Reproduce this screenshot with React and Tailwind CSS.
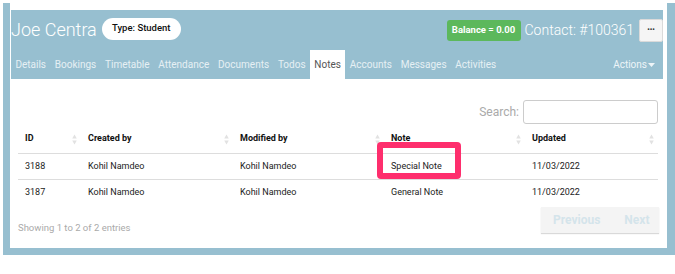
import React from 'react';

const tabs = ['Details', 'Bookings', 'Timetable', 'Attendance', 'Documents', 'Todos', 'Notes', 'Accounts', 'Messages', 'Activities'];

const columns = [
  { label: 'ID', w: 'w-[63px]' },
  { label: 'Created by', w: 'w-[152px]' },
  { label: 'Modified by', w: 'w-[151px]' },
  { label: 'Note', w: 'w-[141px]' },
  { label: 'Updated', w: 'w-[133px]' },
];

const rows = [
  ['3188', 'Kohil Namdeo', 'Kohil Namdeo', 'Special Note', '11/03/2022'],
  ['3187', 'Kohil Namdeo', 'Kohil Namdeo', 'General Note', '11/03/2022'],
];

const SortIcon = () => (
  <svg width="5" height="11" viewBox="0 0 5 11" className="shrink-0">
    <path d="M2.5 0.5 L4.8 4.5 L0.2 4.5 Z" fill="#e2e2e2" />
    <path d="M2.5 10.5 L4.8 6.5 L0.2 6.5 Z" fill="#e2e2e2" />
  </svg>
);

export default function App() {
  return (
    <div className="w-[675px] h-[274px] bg-white pt-[3px] pl-[3px] font-['Roboto',sans-serif] overflow-hidden">
      <div className="h-[252px] bg-[#97bfd0] pl-[7px] pr-[8px] pb-[7px]">
        <div className="relative h-full bg-white pt-[7px] pl-px pr-[4px]">
          {/* header */}
          <div className="bg-[#97bfd0]">
            <div className="h-[40px] flex items-center">
              <div className="text-[18px] font-light text-white leading-none">Joe Centra</div>
              <div className="ml-[5px] mt-[-3px] h-[22px] w-[79px] rounded-full bg-white flex items-center justify-center text-[9.5px] font-medium text-[#111]">
                Type: Student
              </div>
              <div className="ml-auto h-[21px] w-[74px] rounded-[3px] bg-[#5cb85c] flex items-center justify-center text-[9.5px] font-bold text-white">
                Balance = 0.00
              </div>
              <div className="ml-[4px] text-[14px] font-light text-white leading-none">Contact: #100361</div>
              <div className="ml-[5px] w-[24px] h-[23px] rounded-[2px] bg-[#f5f5f5] border border-[#dadada] flex items-center justify-center text-[7px] font-bold text-[#333] leading-none">
                •••
              </div>
            </div>
            <div className="h-[29px] flex items-stretch">
              {tabs.map((t) => (
                <div
                  key={t}
                  className={`px-[4.4px] flex items-center text-[10px] ${
                    t === 'Notes' ? 'bg-white text-[#555]' : 'text-[#e6f0f4]'
                  }`}
                >
                  {t}
                </div>
              ))}
              <div className="ml-auto mr-[8px] flex items-center text-[10px] text-[#eef5f8]">
                Actions
                <svg width="7" height="4" viewBox="0 0 7 4" className="ml-px">
                  <path d="M0 0 L7 0 L3.5 4 Z" fill="#eef5f8" />
                </svg>
              </div>
            </div>
          </div>

          {/* search */}
          <div className="mt-[21px] flex items-center justify-end pr-[5px]">
            <span className="text-[12px] text-[#aaa] mr-[4px]">Search:</span>
            <div className="w-[135px] h-[24px] border border-[#ccc] rounded-[3px]" />
          </div>

          {/* table */}
          <div className="mt-px ml-[7px] w-[640px]">
            <div className="h-[29px] flex items-center border-b border-[#ddd]">
              {columns.map((c) => (
                <div key={c.label} className={`${c.w} flex items-center justify-between pl-[7px] pr-[4px] text-[9px] font-bold text-[#111]`}>
                  <span>{c.label}</span>
                  <SortIcon />
                </div>
              ))}
            </div>
            {rows.map((r, ri) => (
              <div key={r[0]} className={`h-[26px] flex items-center ${ri === 0 ? 'border-b border-[#ddd]' : ''}`}>
                {r.map((v, i) => (
                  <div key={i} className={`${columns[i].w} pl-[7px] text-[9px] text-[#222]`}>
                    {v}
                  </div>
                ))}
              </div>
            ))}
          </div>

          {/* footer */}
          <div className="mt-px ml-[7px] w-[641px] flex items-start justify-between">
            <span className="text-[9.5px] text-[#aaa] mt-[14px]">Showing 1 to 2 of 2 entries</span>
            <div className="h-[26px] w-[118px] bg-[#f4f4f4] shadow-[0_1px_1px_rgba(0,0,0,0.15)] flex items-center text-[12px] font-bold text-[#d4e4eb]">
              <span className="ml-[12px]">Previous</span>
              <span className="ml-[24px]">Next</span>
            </div>
          </div>

          {/* highlight */}
          <div className="absolute left-[367px] top-[139px] w-[84px] h-[37px] border-[6px] border-[#fe2e6d] rounded-[4px]" />
        </div>
      </div>
    </div>
  );
}
